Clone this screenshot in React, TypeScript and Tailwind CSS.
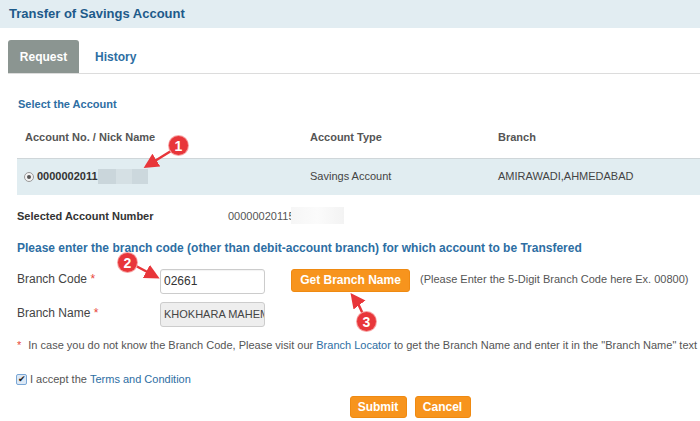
import React from "react";

const font = { fontFamily: '"Liberation Sans", Arial, sans-serif' };

const Badge = ({ n, className }: { n: string; className: string }) => (
  <div
    className={`absolute flex h-[19px] w-[19px] items-center justify-center rounded-full bg-[#e8363a] text-[14px] font-bold leading-none text-white ring-1 ring-[#f7a3a3] ${className}`}
  >
    {n}
  </div>
);

const Arrows = () => (
  <svg
    className="pointer-events-none absolute left-0 top-0"
    width="700"
    height="421"
    viewBox="0 0 700 421"
  >
    <defs>
      <marker id="head" markerWidth="6" markerHeight="6" refX="3" refY="3" orient="auto">
        <path d="M0,0 L6,3 L0,6 Z" fill="#e8363a" />
      </marker>
    </defs>
    <g stroke="#e8363a" strokeWidth="2.5" fill="none" strokeLinecap="round">
      <path d="M171 151 L150 164" markerEnd="url(#head)" />
      <path d="M136 266 L153 275" markerEnd="url(#head)" />
      <path d="M362 312 Q358 303 355 299" markerEnd="url(#head)" />
    </g>
  </svg>
);

const OrangeButton = ({ label, className }: { label: string; className: string }) => (
  <button
    className={`shrink-0 rounded-[3px] border border-[#ef8a12] bg-[#f7941d] text-[12px] font-bold text-white ${className}`}
  >
    {label}
  </button>
);

export default function App() {
  return (
    <div className="relative h-[421px] w-[700px] overflow-hidden bg-white text-[11px] text-[#444]" style={font}>
      {/* header */}
      <div className="flex h-[28px] items-center bg-[#e2edf2] pl-[9px] text-[13px] font-bold text-[#1d5a8a]">
        Transfer of Savings Account
      </div>

      {/* tabs */}
      <div className="ml-[8px] mt-[12px] flex h-[34px] items-end border-b border-[#dcdcdc]">
        <div className="flex h-[33px] w-[71px] items-center justify-center rounded-t-[3px] bg-[#8b9591] text-[12px] font-bold text-white">
          Request
        </div>
        <div className="flex h-[33px] items-center pl-[16px] text-[12px] font-bold text-[#2d6ea3]">
          History
        </div>
      </div>

      {/* select account */}
      <div className="ml-[18px] mt-[22px] text-[11px] font-bold text-[#2d6ea3]">Select the Account</div>

      <div className="ml-[17px] mt-[11px]">
        <div className="flex h-[34px] items-center pb-[6px] font-bold text-[#555]">
          <div className="w-[293px] pl-[8px]">Account No. / Nick Name</div>
          <div className="w-[188px]">Account Type</div>
          <div>Branch</div>
        </div>
        <div className="flex h-[37px] items-center border-t border-[#cfd6d9] bg-[#e1edf1] text-[#444]">
          <div className="flex w-[293px] items-center pl-[7px]">
            <span className="mr-[3px] flex h-[10px] w-[10px] items-center justify-center rounded-full border border-[#999] bg-[#f3f3f3]">
              <span className="h-[4px] w-[4px] rounded-full bg-[#555]" />
            </span>
            <span className="font-bold text-[#333]">0000002011</span>
            <span className="flex h-[15px]">
              <span className="w-[18px] bg-[#cad6db]" />
              <span className="w-[16px] bg-[#d5e0e4]" />
              <span className="w-[16px] bg-[#ccd8dd]" />
            </span>
          </div>
          <div className="w-[188px]">Savings Account</div>
          <div>AMIRAWADI,AHMEDABAD</div>
        </div>
      </div>

      <div className="ml-[17px] mt-[14px] flex h-[16px] items-center">
        <div className="w-[211px] font-bold text-[#333]">Selected Account Number</div>
        <div className="flex items-center text-[#555]">
          <span>0000002011</span>
          <span className="relative">
            5
            <span className="absolute -top-[1px] left-[3px] h-[17px] w-[53px] bg-gradient-to-r from-[#f6f6f6] via-[#fbfbfb] to-[#f3f3f3]" />
          </span>
        </div>
      </div>

      <div className="ml-[17px] mt-[14px] text-[12px] font-bold text-[#2d6ea3]">
        Please enter the branch code (other than debit-account branch) for which account to be Transfered
      </div>

      {/* branch code */}
      <div className="ml-[17px] mt-[12px] flex items-start whitespace-nowrap">
        <div className="w-[143px] shrink-0 pt-[1px] text-[12px] text-[#444]">
          Branch Code <span className="text-[#e8473a]">*</span>
        </div>
        <div className="flex h-[25px] w-[105px] shrink-0 items-center rounded-[3px] border border-[#cccccc] bg-white px-[3px] text-[12px] text-[#333] shadow-[inset_0_1px_1px_rgba(0,0,0,0.05)]">
          02661
        </div>
        <OrangeButton label="Get Branch Name" className="ml-[26px] h-[23px] w-[119px]" />
        <div className="ml-[10px] pt-[2px] text-[#555]">(Please Enter the 5-Digit Branch Code here Ex. 00800)</div>
      </div>

      {/* branch name */}
      <div className="ml-[17px] mt-[8px] flex items-start">
        <div className="w-[143px] shrink-0 pt-[2px] text-[12px] text-[#444]">
          Branch Name <span className="text-[#e8473a]">*</span>
        </div>
        <div className="flex h-[25px] w-[105px] shrink-0 items-center overflow-hidden whitespace-nowrap rounded-[3px] border border-[#cccccc] bg-[#eeeeee] px-[3px] text-[11px] text-[#444]">
          KHOKHARA MAHEMDAVAD
        </div>
      </div>

      {/* note */}
      <div className="ml-[17px] mt-[10px] whitespace-nowrap text-[11px] text-[#555]">
        <span className="text-[#e8473a]">*</span>
        <span className="ml-[7px]">In case you do not know the Branch Code, Please visit our </span>
        <span className="text-[#2d6ea3]">Branch Locator</span>
        <span> to get the Branch Name and enter it in the "Branch Name" text box</span>
      </div>

      {/* accept */}
      <div className="ml-[16px] mt-[18px] flex items-center text-[#555]">
        <span className="mr-[3px] flex h-[11px] w-[11px] items-center justify-center rounded-[2px] border border-[#7aa7d6] bg-[#dde9f6] text-[9px] leading-none text-[#222]">
          ✔
        </span>
        <span>I accept the&nbsp;</span>
        <span className="text-[#2d6ea3]">Terms and Condition</span>
      </div>

      <div className="mt-[8px] flex justify-center gap-[8px] pl-[120px]">
        <OrangeButton label="Submit" className="h-[22px] w-[57px]" />
        <OrangeButton label="Cancel" className="h-[22px] w-[56px]" />
      </div>

      <Arrows />
      <Badge n="1" className="left-[169px] top-[136px]" />
      <Badge n="2" className="left-[118px] top-[253px]" />
      <Badge n="3" className="left-[357px] top-[312px]" />
    </div>
  );
}
